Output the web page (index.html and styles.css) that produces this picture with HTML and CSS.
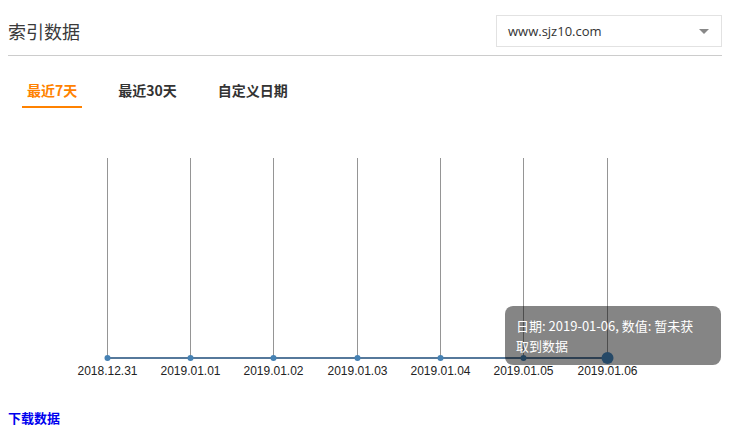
FILE: index.html
```html
<!DOCTYPE html>
<html lang="zh-CN">
<head>
    <meta charset="UTF-8">
    <title>索引数据</title>
    <link rel="stylesheet" href="styles.css">
</head>
<body>
    <div class="panel">
        <div class="panel-header">
            <h2 class="panel-title">索引数据</h2>
            <div class="site-select">
                <span class="site-name">www.sjz10.com</span>
                <span class="select-arrow"></span>
            </div>
        </div>

        <div class="tabs">
            <span class="tab active">最近7天</span>
            <span class="tab">最近30天</span>
            <span class="tab">自定义日期</span>
        </div>

        <div class="chart">
            <svg class="chart-svg" width="714" height="296" viewBox="0 0 714 296">
                <g class="grid">
                    <line x1="99.5" y1="50" x2="99.5" y2="250"></line>
                    <line x1="182.5" y1="50" x2="182.5" y2="250"></line>
                    <line x1="265.5" y1="50" x2="265.5" y2="250"></line>
                    <line x1="349.5" y1="50" x2="349.5" y2="250"></line>
                    <line x1="432.5" y1="50" x2="432.5" y2="250"></line>
                    <line x1="515.5" y1="50" x2="515.5" y2="250"></line>
                    <line x1="599.5" y1="50" x2="599.5" y2="250"></line>
                </g>
                <line class="baseline" x1="99.5" y1="250" x2="599.5" y2="250"></line>
                <g class="dots">
                    <circle cx="99.5" cy="250" r="3"></circle>
                    <circle cx="182.5" cy="250" r="3"></circle>
                    <circle cx="265.5" cy="250" r="3"></circle>
                    <circle cx="349.5" cy="250" r="3"></circle>
                    <circle cx="432.5" cy="250" r="3"></circle>
                    <circle cx="515.5" cy="250" r="3"></circle>
                    <circle class="dot-hover" cx="599.5" cy="250" r="6"></circle>
                </g>
                <g class="labels">
                    <text x="99.5" y="267">2018.12.31</text>
                    <text x="182.5" y="267">2019.01.01</text>
                    <text x="265.5" y="267">2019.01.02</text>
                    <text x="349.5" y="267">2019.01.03</text>
                    <text x="432.5" y="267">2019.01.04</text>
                    <text x="515.5" y="267">2019.01.05</text>
                    <text x="599.5" y="267">2019.01.06</text>
                </g>
            </svg>
            <div class="tooltip">日期: 2019-01-06, 数值: 暂未获取到数据</div>
        </div>

        <a class="download" href="#">下载数据</a>
    </div>
</body>
</html>
```

FILE: styles.css
```css
body {
    margin: 8px;
    background: #fff;
    font-family: "Noto Sans CJK SC", sans-serif;
}

.panel {
    width: 714px;
}

.panel-header {
    display: flex;
    justify-content: space-between;
    align-items: center;
    padding: 7px 0 8px 0;
    border-bottom: 1px solid #cccccc;
}

.panel-title {
    margin: 0;
    font-size: 18px;
    font-weight: normal;
    color: #3a3a3a;
}

.site-select {
    box-sizing: border-box;
    width: 226px;
    height: 32px;
    border: 1px solid #e2e2e2;
    display: flex;
    align-items: center;
    justify-content: space-between;
    padding: 0 12px 0 11px;
}

.site-name {
    font-family: "Open Sans", "Liberation Sans", sans-serif;
    font-size: 13px;
    color: #333;
}

.select-arrow {
    width: 0;
    height: 0;
    border-left: 5px solid transparent;
    border-right: 5px solid transparent;
    border-top: 5px solid #888;
}

.tabs {
    display: flex;
    gap: 31px;
    margin: 24px 0 0 14px;
}

.tab {
    padding: 0 5px 6px;
    font-size: 14px;
    font-weight: bold;
    color: #333;
    line-height: 20px;
    border-bottom: 2px solid transparent;
}

.tab.active {
    color: #ff8200;
    border-bottom-color: #ff8200;
}

.chart {
    position: relative;
    height: 296px;
}

.chart-svg {
    display: block;
}

.grid line {
    stroke: #959595;
    stroke-width: 1;
}

.baseline {
    stroke: #56799b;
    stroke-width: 2;
}

.dots circle {
    fill: #4682b4;
}

.dots .dot-hover {
    fill: #4a8cc6;
}

.labels text {
    font-family: "Liberation Sans", sans-serif;
    font-size: 12px;
    fill: #222;
    text-anchor: middle;
}

.tooltip {
    position: absolute;
    left: 497px;
    top: 198px;
    box-sizing: border-box;
    width: 216px;
    padding: 10px 22px 9px 11px;
    border-radius: 8px;
    background: rgba(0, 0, 0, 0.48);
    color: #fff;
    font-size: 13px;
    line-height: 20px;
}

.download {
    display: inline-block;
    font-size: 13px;
    line-height: 18px;
    font-weight: bold;
    color: #0000ee;
    text-decoration: none;
}
```
